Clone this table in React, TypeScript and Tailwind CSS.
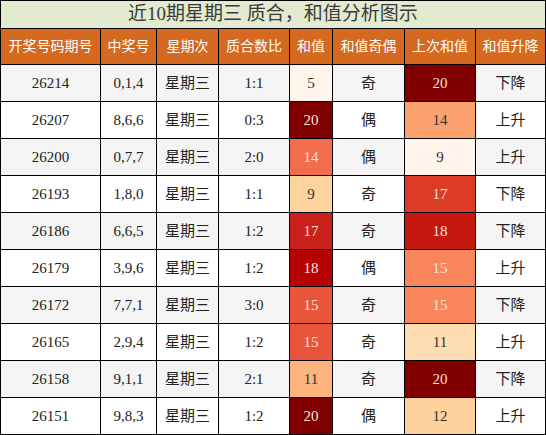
const rows: [string, string, string, number, string, number, string][] = [
  ["26214", "0,1,4", "1:1", 5, "奇", 20, "下降"],
  ["26207", "8,6,6", "0:3", 20, "偶", 14, "上升"],
  ["26200", "0,7,7", "2:0", 14, "偶", 9, "上升"],
  ["26193", "1,8,0", "1:1", 9, "奇", 17, "下降"],
  ["26186", "6,6,5", "1:2", 17, "奇", 18, "下降"],
  ["26179", "3,9,6", "1:2", 18, "偶", 15, "上升"],
  ["26172", "7,7,1", "3:0", 15, "奇", 15, "下降"],
  ["26165", "2,9,4", "1:2", 15, "奇", 11, "上升"],
  ["26158", "9,1,1", "2:1", 11, "奇", 20, "下降"],
  ["26151", "9,8,3", "1:2", 20, "偶", 12, "上升"],
]

// heat colours, per column
const sumColor: Record<number, string> = {
  5: "bg-[#fff5eb] text-[#333]",
  9: "bg-[#fdd49e] text-[#333]",
  11: "bg-[#fdb47e] text-[#333]",
  14: "bg-[#f26d4b] text-[#fde2d6]",
  15: "bg-[#e8553b] text-[#fde2d6]",
  17: "bg-[#c8201a] text-[#fde2d6]",
  18: "bg-[#b50303] text-[#fde2d6]",
  20: "bg-[#800000] text-[#fde2d6]",
}

const prevColor: Record<number, string> = {
  9: "bg-[#fff5eb] text-[#333]",
  11: "bg-[#fddcb1] text-[#333]",
  12: "bg-[#fdd09c] text-[#333]",
  14: "bg-[#fca26e] text-[#333]",
  15: "bg-[#f9855a] text-[#fde2d6]",
  17: "bg-[#dc3b25] text-[#fde2d6]",
  18: "bg-[#c4180f] text-[#fde2d6]",
  20: "bg-[#800000] text-[#fde2d6]",
}

const headers = ["开奖号码期号", "中奖号", "星期次", "质合数比", "和值", "和值奇偶", "上次和值", "和值升降"]

const App = () => {
  return (
    <div className="w-[546px] h-[435px] bg-white font-['Liberation_Serif','Noto_Sans_CJK_SC',serif]">
      <div className="grid grid-cols-[99px_55px_61px_70px_42px_71px_70px_69px] grid-rows-[27px_35px_repeat(10,36px)] gap-px p-px bg-black">
        <div className="col-span-8 bg-[#e2ebcf] flex items-center justify-center text-[19px] text-[#3a3a3a]">
          近10期星期三 质合，和值分析图示
        </div>

        {headers.map((h) => (
          <div key={h} className="bg-[#d4691f] text-white text-[14px] flex items-center justify-center">
            {h}
          </div>
        ))}

        {rows.map((r, i) => {
          const bg = i % 2 === 0 ? "bg-[#f4f4f4]" : "bg-white"
          const cell = `${bg} flex items-center justify-center text-[15px] text-[#222]`
          return [
            <div key={`${i}a`} className={cell}>{r[0]}</div>,
            <div key={`${i}b`} className={cell}>{r[1]}</div>,
            <div key={`${i}c`} className={`${cell} text-[#111]`}>星期三</div>,
            <div key={`${i}d`} className={cell}>{r[2]}</div>,
            <div key={`${i}e`} className={`${sumColor[r[3]]} flex items-center justify-center text-[15px]`}>{r[3]}</div>,
            <div key={`${i}f`} className={`${cell} text-[#111]`}>{r[4]}</div>,
            <div key={`${i}g`} className={`${prevColor[r[5]]} flex items-center justify-center text-[15px]`}>{r[5]}</div>,
            <div key={`${i}h`} className={`${cell} text-[#111]`}>{r[6]}</div>,
          ]
        })}
      </div>
    </div>
  )
}

export default App
